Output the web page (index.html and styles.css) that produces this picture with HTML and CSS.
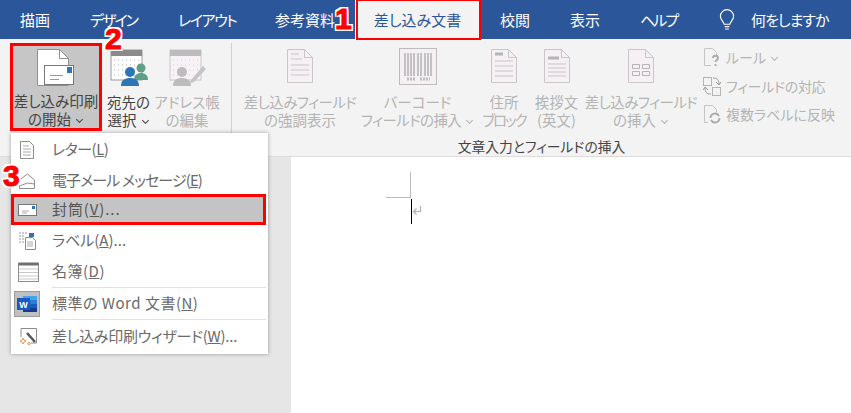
FILE: index.html
```html
<!DOCTYPE html>
<html lang="ja">

<head>
    <meta charset="UTF-8">
    <title>差し込み文書</title>
    <link rel="stylesheet" href="styles.css">
</head>

<body>
    <div class="app">
        <!-- tabs -->
        <div class="tabbar">
            <div class="tab">描画</div>
            <div class="tab tab-design">デザイン</div>
            <div class="tab tab-layout">レイアウト</div>
            <div class="tab">参考資料</div>
            <div class="tab tab-active">差し込み文書</div>
            <div class="tab">校閲</div>
            <div class="tab">表示</div>
            <div class="tab tab-help">ヘルプ</div>
            <div class="tell-me">
                <svg width="16" height="24" viewBox="0 0 17 24" fill="none" stroke="#fff" stroke-width="1.2">
                    <path d="M5.5 16.5C5 13.5 1.5 12 1.5 8a7 7 0 0 1 14 0c0 4-3.500 5.500-4 8.500z"/>
                    <path d="M6 19h5M6.500 21.500h4"/>
                </svg>
                <span>何をしますか</span>
            </div>
        </div>

        <!-- ribbon -->
        <div class="ribbon">
            <div class="group group-start">
                <div class="rbtn rbtn-start">
                    <div class="rbtn-icon">
                        <svg width="40" height="40" viewBox="0 0 40 40" fill="none" stroke="#8f8f8f">
                            <path fill="#fff" d="M1.500 1.500h22l9 9v27h-31z"/>
                            <path d="M23.500 1.500v9h9"/>
                            <rect x="8.500" y="17.500" width="29" height="19" fill="#fff" stroke="#777"/>
                            <rect x="31" y="19" width="5" height="6" fill="#2e75b6" stroke="none"/>
                            <path d="M14 27.500h13M14 31.500h9" stroke="#999"/>
                        </svg>
                    </div>
                    <div class="rbtn-label">差し込み印刷</div>
                    <div class="rbtn-label">の開始<span class="chev"></span></div>
                </div>
                <div class="rbtn rbtn-to">
                    <div class="rbtn-icon">
                        <svg width="38" height="40" viewBox="0 0 38 40">
                            <rect x="1" y="2" width="31" height="30" fill="#fff" stroke="#9a9a9a"/>
                            <rect x="1" y="2" width="31" height="6" fill="#8a8a8a"/>
                            <path d="M4 12h26M4 17h26M4 22h26M4 27h26" stroke="#b5b5b5" stroke-dasharray="1 3"/>
                            <circle cx="31" cy="20" r="4.500" fill="#5f9e88"/>
                            <path d="M24 32c0-5 3-7 7-7s7 2 7 7z" fill="#5f9e88"/>
                            <circle cx="20" cy="24" r="5" fill="#2e75b6"/>
                            <path d="M11 38c0-6 4-8 9-8s9 2 9 8z" fill="#2e75b6"/>
                        </svg>
                    </div>
                    <div class="rbtn-label">宛先の</div>
                    <div class="rbtn-label">選択<span class="chev"></span></div>
                </div>
                <div class="rbtn rbtn-book off">
                    <div class="rbtn-icon">
                        <svg width="40" height="40" viewBox="0 0 40 40">
                            <rect x="3" y="2" width="31" height="30" fill="#f6f2f6" stroke="#c8c8c8"/>
                            <rect x="3" y="2" width="31" height="6" fill="#bcbcbc"/>
                            <path d="M6 12h26M6 17h26M6 22h26M6 27h26" stroke="#d5d0d5" stroke-dasharray="1 3"/>
                            <circle cx="15" cy="24" r="5" fill="#bdbdbd"/>
                            <path d="M6 38c0-6 4-8 9-8s9 2 9 8z" fill="#bdbdbd"/>
                            <path d="M24 32l12-14 3 3-12 13-4 1z" fill="#c4c4c4"/>
                        </svg>
                    </div>
                    <div class="rbtn-label">アドレス帳</div>
                    <div class="rbtn-label">の編集</div>
                </div>
            </div>

            <div class="group group-fields">
                <div class="field-row">
                    <div class="rbtn rbtn-high off">
                        <div class="rbtn-icon">
                            <svg width="28" height="36" viewBox="0 0 28 36" fill="#f4f0f4" stroke="#c9c5c9">
                                <path d="M1.500 1.500h17l8 8v25h-25z"/>
                                <path d="M18.500 1.500v8h8" fill="none"/>
                                <path d="M5 6h8M5 11h11M5 17h18M5 22h18M5 27h18" fill="none" stroke="#d6d2d6" stroke-width="1.500"/>
                            </svg>
                        </div>
                        <div class="rbtn-label label-kana">差し込みフィールド</div>
                        <div class="rbtn-label">の強調表示</div>
                    </div>
                    <div class="rbtn rbtn-code off">
                        <div class="rbtn-icon">
                            <svg width="38" height="38" viewBox="0 0 38 38">
                                <rect x="0.500" y="0.500" width="37" height="36" fill="#f4f0f4" stroke="#bdbdbd"/>
                                <path d="M6 5v23M9 5v23M12 5v23M15 5v23M19 5v23M22 5v23M26 5v23M29 5v23M32 5v23" stroke="#b3b3b3" stroke-width="1.500"/>
                                <path d="M8 31h9M21 31h10" stroke="#bcbcbc" stroke-width="3" stroke-dasharray="2 1"/>
                            </svg>
                        </div>
                        <div class="rbtn-label">バーコード</div>
                        <div class="rbtn-label label-kana">フィールドの挿入<span class="chev"></span></div>
                    </div>
                    <div class="rbtn rbtn-addr off">
                        <div class="rbtn-icon">
                            <svg width="28" height="36" viewBox="0 0 28 36" fill="#f4f0f4" stroke="#c9c5c9">
                                <path d="M1.500 1.500h17l8 8v25h-25z"/>
                                <path d="M18.500 1.500v8h8" fill="none"/>
                                <path d="M5 6h8" fill="none" stroke="#b5b5b5" stroke-width="3"/>
                                <path d="M5 13h18M5 18h18M5 23h18M5 28h18" fill="none" stroke="#d6d2d6" stroke-width="1.500"/>
                            </svg>
                        </div>
                        <div class="rbtn-label">住所</div>
                        <div class="rbtn-label label-block">ブロック</div>
                    </div>
                    <div class="rbtn rbtn-greet off">
                        <div class="rbtn-icon">
                            <svg width="28" height="36" viewBox="0 0 28 36" fill="#f4f0f4" stroke="#c9c5c9">
                                <path d="M1.500 1.500h17l8 8v25h-25z"/>
                                <path d="M18.500 1.500v8h8" fill="none"/>
                                <path d="M5 10h11" fill="none" stroke="#b5b5b5" stroke-width="3"/>
                                <path d="M5 16h18M5 20h18M5 24h18M5 28h18" fill="none" stroke="#d6d2d6" stroke-width="1.500"/>
                            </svg>
                        </div>
                        <div class="rbtn-label">挨拶文</div>
                        <div class="rbtn-label">(英文)</div>
                    </div>
                    <div class="rbtn rbtn-insert off">
                        <div class="rbtn-icon">
                            <svg width="28" height="36" viewBox="0 0 28 36" fill="#f4f0f4" stroke="#c9c5c9">
                                <path d="M1.500 1.500h17l8 8v25h-25z"/>
                                <path d="M18.500 1.500v8h8" fill="none"/>
                                <path d="M5.500 16.500h7v4h-7zM15.500 16.500h7v4h-7zM5.500 23.500h7v4h-7zM15.500 23.500h7v4h-7z" fill="none" stroke="#b5b5b5"/>
                            </svg>
                        </div>
                        <div class="rbtn-label label-kana">差し込みフィールド</div>
                        <div class="rbtn-label">の挿入<span class="chev"></span></div>
                    </div>
                    <div class="small-col off">
                        <div class="sbtn">
                            <svg width="18" height="20" viewBox="0 0 18 20" fill="none" stroke="#c4c4c4">
                                <path d="M8 18.500H1.500v-17h8l4 4v3"/>
                                <path d="M10 11c0-3 5-3 5 0 0 2-2.500 2-2.500 4M12.500 17v2" stroke="#a9a9a9" stroke-width="1.800"/>
                            </svg>
                            <span>ルール<span class="chev"></span></span>
                        </div>
                        <div class="sbtn">
                            <svg width="18" height="20" viewBox="0 0 18 20" fill="none" stroke="#b5b5b5">
                                <rect x="0.500" y="1.500" width="8" height="8"/>
                                <rect x="9.500" y="11.500" width="8" height="8"/>
                                <path d="M10 2c4 0 6 2 6 6M13 6l3 3 2-3M8 18c-4 0-6-2-6-6M5 14l-3-3-2 3" stroke="#999"/>
                            </svg>
                            <span class="label-field">フィールドの対応</span>
                        </div>
                        <div class="sbtn">
                            <svg width="18" height="20" viewBox="0 0 18 20" fill="none" stroke="#c4c4c4">
                                <path d="M5 18.500H1.500v-17h8l4 4v3"/>
                                <path d="M16.500 14a4.500 4.500 0 0 1-8.500 2M7.500 14a4.500 4.500 0 0 1 8.500-2" stroke="#aaa" stroke-width="1.800"/>
                            </svg>
                            <span>複数ラベルに反映</span>
                        </div>
                    </div>
                </div>
                <div class="group-label">文章入力とフィールドの挿入</div>
            </div>
        </div>

        <!-- document -->
        <div class="workspace">
            <div class="page">
                <div class="crop-v"></div>
                <div class="crop-h"></div>
                <div class="caret"></div>
                <svg class="return-mark" width="10" height="10" viewBox="0 0 10 10" fill="none" stroke="#b0b0b0" stroke-width="1.200">
                    <path d="M8.500 1v5.500H2M4.500 3.500l-3 3 3 3"/>
                </svg>
            </div>
        </div>

        <!-- dropdown -->
        <div class="menu">
            <div class="menu-item">
                <svg width="18" height="20" viewBox="0 0 18 20" fill="#fff" stroke="#8c8c8c">
                    <path d="M2.500 1.500h9l4 4v13h-13z"/>
                    <path d="M5 6h6M5 9h8M5 12h8M5 15h8" stroke="#aaa"/>
                </svg>
                <span class="text-letter">レター(<u>L</u>)</span>
            </div>
            <div class="menu-item">
                <svg width="18" height="20" viewBox="0 0 18 20" fill="#fff" stroke="#8c8c8c">
                    <path d="M1.500 9l8-6 7 6v8.500h-15z"/>
                    <path d="M1.500 15l8-3 7 1" fill="none"/>
                </svg>
                <span class="text-mail">電子メール メッセージ(<u>E</u>)</span>
            </div>
            <div class="menu-item menu-item-on">
                <svg width="20" height="14" viewBox="0 0 20 14" fill="#fff" stroke="#777">
                    <rect x="0.500" y="1.500" width="18" height="11"/>
                    <rect x="14" y="3" width="3" height="3" fill="#2e75b6" stroke="none"/>
                    <path d="M4 8h7M4 10h5" stroke="#aaa"/>
                </svg>
                <span class="text-env">封筒(<u>V</u>)...</span>
            </div>
            <div class="menu-item">
                <svg width="20" height="20" viewBox="0 0 20 20" fill="#fff" stroke="#8c8c8c">
                    <path d="M7.500 6.500h7l3 3v9h-10z"/>
                    <path d="M9 11h6M9 13h6M9 15h6" stroke="#aaa"/>
                    <rect x="11" y="2" width="5" height="4" fill="#2e75b6" stroke="none"/>
                    <path d="M1 2h8M1 5h5M1 8h5M1 11h5" stroke="#999" stroke-dasharray="2 1"/>
                </svg>
                <span>ラベル(<u>A</u>)...</span>
            </div>
            <div class="menu-item">
                <svg width="21" height="20" viewBox="0 0 21 20" fill="#fff" stroke="#c8c8c8">
                    <rect x="0.500" y="1.500" width="20" height="18" stroke="#8c8c8c"/>
                    <rect x="0.500" y="0.500" width="20" height="3" fill="#6e6e6e" stroke="none"/>
                    <path d="M1 7h19M1 10.500h19M1 14h19M1 17h19"/>
                </svg>
                <span class="text-list">名簿(<u>D</u>)</span>
            </div>
            <div class="menu-sep"></div>
            <div class="menu-item">
                <div class="word-box">
                    <svg width="20" height="18" viewBox="0 0 20 18">
                        <rect x="6" y="1" width="14" height="16" fill="#2b7cd3"/>
                        <rect x="6" y="1" width="14" height="4" fill="#41a5ee"/>
                        <rect x="6" y="9" width="14" height="4" fill="#185abd"/>
                        <rect x="6" y="13" width="14" height="4" fill="#103f91"/>
                        <rect x="0" y="3" width="13" height="12" fill="#185abd"/>
                        <text x="6.500" y="12.500" class="word-letter">W</text>
                    </svg>
                </div>
                <span class="text-word">標準の Word 文書(<u>N</u>)</span>
            </div>
            <div class="menu-sep"></div>
            <div class="menu-item menu-item-last">
                <svg width="20" height="20" viewBox="0 0 20 20" fill="none" stroke="#8c8c8c">
                    <path d="M3 10V1.500h15.500V16H13"/>
                    <path d="M9 6l8 9" stroke="#555" stroke-width="2.500"/>
                    <path d="M5 11l1 2 2 1-2 1-1 2-1-2-2-1 2-1zM11 15l.5 1 1 .5-1 .5-.5 1-.5-1-1-.5 1-.5z" stroke="#e07b28" stroke-width="0.800"/>
                </svg>
                <span class="text-wizard">差し込み印刷ウィザード(<u>W</u>)...</span>
            </div>
        </div>

        <!-- red marks added on the screenshot -->
        <div class="red-box"></div>
        <div class="step step-1">1</div>
        <div class="step step-2">2</div>
        <div class="step step-3">3</div>
    </div>
</body>

</html>
```

FILE: styles.css
```css
* {
    box-sizing: border-box;
}

body {
    margin: 0;
    font-family: "Noto Sans CJK JP", "Noto Sans", sans-serif;
    font-feature-settings: "palt";
    overflow: hidden;
}

.app {
    position: relative;
    width: 851px;
    height: 413px;
    display: flex;
    flex-direction: column;
    overflow: hidden;
    background-color: #e6e6e6;
}

/* tabs */
.tabbar {
    display: flex;
    height: 39px;
    flex-shrink: 0;
    background-color: #2b579a;
    color: #ffffff;
    font-size: 15px;
}

.tab {
    padding: 0 20px;
    line-height: 39px;
    white-space: nowrap;
}

.tab-design {
    width: 88px;
    letter-spacing: -2px;
}

.tab-layout {
    width: 97px;
    letter-spacing: -1.400px;
}

.tab-help {
    width: 78px;
    letter-spacing: -2px;
}

.tab-active {
    width: 125px;
    padding: 0;
    text-align: center;
    background-color: #f3f3f3;
    color: #2b579a;
}

.tell-me {
    display: flex;
    align-items: center;
    gap: 16px;
    margin-left: 21px;
    white-space: nowrap;
    letter-spacing: -1px;
}

/* ribbon */
.ribbon {
    display: flex;
    height: 118px;
    flex-shrink: 0;
    background-color: #f3f3f3;
    border-bottom: 1px solid #dcdcdc;
    font-size: 14.500px;
    color: #444444;
}

.group {
    padding-top: 4px;
}

.group-start {
    display: flex;
    gap: 2px;
    width: 232px;
    padding-left: 10px;
    position: relative;
}

.group-start::after {
    content: "";
    position: absolute;
    right: 0;
    top: 4px;
    height: 108px;
    width: 1px;
    background-color: #d2d2d2;
}

.group-fields {
    flex: 1;
}

.field-row {
    display: flex;
    padding-left: 13px;
}

.rbtn {
    height: 87px;
    display: flex;
    flex-direction: column;
    align-items: center;
    white-space: nowrap;
}

.rbtn-icon {
    height: 50px;
    padding-top: 5px;
    display: flex;
    align-items: flex-start;
    justify-content: center;
}

.rbtn-label {
    line-height: 18px;
}

.label-kana {
    letter-spacing: -0.600px;
}

.label-field {
    letter-spacing: -0.300px;
}

.label-block {
    letter-spacing: -2px;
}

.off {
    color: #b4b4b4;
}

.rbtn-start {
    width: 92px;
    height: 88px;
    background-color: #c6c6c6;
    border: 3px solid #ff0000;
}

.rbtn-start .rbtn-icon {
    height: 47px;
    padding-top: 2px;
}

.rbtn-to {
    width: 49px;
}

.rbtn-book {
    width: 64px;
}

.rbtn-high {
    width: 110px;
}

.rbtn-code {
    width: 111px;
    margin-left: 7px;
}

.rbtn-addr {
    width: 42px;
    margin-left: 10px;
}

.rbtn-greet {
    width: 43px;
    margin-left: 10px;
}

.rbtn-insert {
    width: 110px;
    margin-left: 8px;
}

.chev {
    display: inline-block;
    width: 5px;
    height: 5px;
    margin: 0 2px 3px 6px;
    border-right: 1px solid currentColor;
    border-bottom: 1px solid currentColor;
    transform: rotate(45deg);
}

.small-col {
    margin-left: 7px;
}

.sbtn {
    display: flex;
    align-items: center;
    gap: 5px;
    height: 28.500px;
    white-space: nowrap;
    font-size: 14px;
}

.group-label {
    margin-top: 7px;
    line-height: 18px;
    font-size: 13.800px;
    text-align: center;
    color: #444444;
}

/* document */
.workspace {
    flex: 1;
    padding-left: 291px;
}

.page {
    position: relative;
    height: 100%;
    background-color: #ffffff;
}

.crop-v {
    position: absolute;
    left: 119px;
    top: 15px;
    width: 1px;
    height: 26px;
    background-color: #bbbbbb;
}

.crop-h {
    position: absolute;
    left: 95px;
    top: 40px;
    width: 25px;
    height: 1px;
    background-color: #bbbbbb;
}

.caret {
    position: absolute;
    left: 120px;
    top: 42px;
    width: 1px;
    height: 25px;
    background-color: #000000;
}

.return-mark {
    position: absolute;
    left: 121px;
    top: 48px;
}

/* dropdown */
.menu {
    position: absolute;
    left: 11px;
    top: 133px;
    width: 257px;
    height: 221px;
    background-color: #ffffff;
    box-shadow: 0 0 4px rgba(0, 0, 0, 0.35);
    font-size: 15px;
    color: #6a6a6a;
    padding-top: 1px;
}

.menu-item {
    position: relative;
    height: 31px;
    display: flex;
    align-items: center;
    padding-left: 41px;
    padding-bottom: 2px;
    white-space: nowrap;
}

.text-letter {
    letter-spacing: -0.500px;
}

.text-mail {
    letter-spacing: -0.900px;
}

.text-env {
    letter-spacing: 0.900px;
}

.text-list,
.text-word {
    letter-spacing: 0.500px;
}

.text-wizard {
    letter-spacing: -0.250px;
}

.menu-item svg,
.word-box {
    position: absolute;
    left: 7px;
    top: 50%;
    transform: translateY(-50%);
}

.menu-item-on {
    margin-top: -2px;
    background-color: #c4c4c4;
    border: 3px solid #ff0000;
    width: 255px;
    padding-left: 38px;
    color: #555555;
}

.menu-item-on svg {
    left: 4px;
}

.menu-item-last {
    height: 33px;
}

.menu-sep {
    height: 1px;
    margin-left: 41px;
    margin-right: 2px;
    background-color: #e1e1e1;
}

.word-box {
    left: 3px;
    width: 26px;
    height: 26px;
    background-color: #c0c0c0;
    border: 1px solid #9c9c9c;
    display: flex;
    align-items: center;
    justify-content: center;
}

.word-box svg {
    position: static;
    transform: none;
}

.word-letter {
    font-family: "Liberation Sans", sans-serif;
    font-size: 9px;
    font-weight: bold;
    fill: #ffffff;
    text-anchor: middle;
}

/* marks */
.red-box {
    position: absolute;
    left: 356px;
    top: 0;
    width: 125px;
    height: 40px;
    border: 2px solid #ff0000;
    border-top-width: 1px;
}

.step {
    position: absolute;
    font-family: "Liberation Sans", sans-serif;
    font-weight: bold;
    font-size: 30px;
    line-height: 30px;
    color: #ff0000;
    -webkit-text-stroke: 1px #ff0000;
    text-shadow: 2px 0 0 #fff, -2px 0 0 #fff, 0 2px 0 #fff, 0 -2px 0 #fff,
        2px 2px 0 #fff, -2px 2px 0 #fff, 2px -2px 0 #fff, -2px -2px 0 #fff;
}

.step-1 {
    left: 335px;
    top: 4px;
}

.step-2 {
    left: 105px;
    top: 24px;
}

.step-3 {
    left: 3px;
    top: 161px;
}
```
